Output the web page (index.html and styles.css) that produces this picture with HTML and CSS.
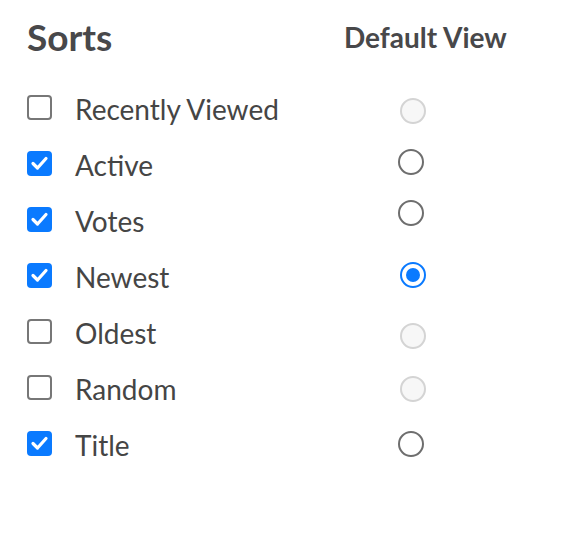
FILE: index.html
```html
<!DOCTYPE html>
<html>
<head>
<meta charset="utf-8">
<link rel="stylesheet" href="styles.css">
</head>
<body>
<div class="panel">
  <div class="head">
    <h2 class="title">Sorts</h2>
    <h3 class="subtitle">Default View</h3>
  </div>
  <ul class="list">
    <li class="row">
      <span class="box"></span>
      <span class="label">Recently Viewed</span>
      <span class="radio disabled r1"></span>
    </li>
    <li class="row">
      <span class="box checked"><svg viewBox="0 0 25 25" width="25" height="25"><polyline points="6,12.5 10.5,17 19,7.5" fill="none" stroke="#fff" stroke-width="3.2" stroke-linecap="round" stroke-linejoin="round"/></svg></span>
      <span class="label">Active</span>
      <span class="radio enabled r2"></span>
    </li>
    <li class="row">
      <span class="box checked"><svg viewBox="0 0 25 25" width="25" height="25"><polyline points="6,12.5 10.5,17 19,7.5" fill="none" stroke="#fff" stroke-width="3.2" stroke-linecap="round" stroke-linejoin="round"/></svg></span>
      <span class="label">Votes</span>
      <span class="radio enabled r3"></span>
    </li>
    <li class="row">
      <span class="box checked"><svg viewBox="0 0 25 25" width="25" height="25"><polyline points="6,12.5 10.5,17 19,7.5" fill="none" stroke="#fff" stroke-width="3.2" stroke-linecap="round" stroke-linejoin="round"/></svg></span>
      <span class="label">Newest</span>
      <span class="radio selected r4"></span>
    </li>
    <li class="row">
      <span class="box"></span>
      <span class="label">Oldest</span>
      <span class="radio disabled r5"></span>
    </li>
    <li class="row">
      <span class="box"></span>
      <span class="label">Random</span>
      <span class="radio disabled r6"></span>
    </li>
    <li class="row">
      <span class="box checked"><svg viewBox="0 0 25 25" width="25" height="25"><polyline points="6,12.5 10.5,17 19,7.5" fill="none" stroke="#fff" stroke-width="3.2" stroke-linecap="round" stroke-linejoin="round"/></svg></span>
      <span class="label">Title</span>
      <span class="radio enabled r7"></span>
    </li>
  </ul>
</div>
</body>
</html>
```
FILE: styles.css
```css
html, body {
  margin: 0;
  padding: 0;
  background: #fff;
}
body {
  font-family: Lato, "Open Sans", sans-serif;
  color: #454545;
}
.panel {
  padding: 15px 0 0 27px;
  width: 549px;
}
.head {
  display: flex;
  align-items: flex-start;
  height: 64px;
}
.title {
  margin: 0;
  font-size: 37px;
  font-weight: 700;
  line-height: 1.2;
  width: 317px;
  flex: none;
  color: #48484a;
}
.subtitle {
  margin: 6px 0 0 0;
  font-size: 28px;
  font-weight: 700;
  line-height: 1.2;
  white-space: nowrap;
  color: #48484a;
}
.list {
  list-style: none;
  margin: 0;
  padding: 0;
}
.row {
  display: flex;
  align-items: center;
  height: 56px;
}
.box {
  box-sizing: border-box;
  width: 25px;
  height: 25px;
  border: 2px solid #777;
  border-radius: 4px;
  flex: none;
  display: block;
  background: #fff;
}
.box.checked {
  border: none;
  background: #0a7aff;
}
.box svg {
  display: block;
}
.label {
  font-size: 28px;
  line-height: 32px;
  padding-top: 4px;
  margin-left: 23px;
  width: 325px;
  flex: none;
}
.radio {
  box-sizing: border-box;
  display: block;
  width: 26px;
  height: 26px;
  border-radius: 50%;
  flex: none;
  position: relative;
}
.radio.disabled {
  border: 2px solid #d4d4d4;
  background: #f7f7f7;
}
.radio.enabled {
  border: 2px solid #6e6e6e;
  background: #fff;
  margin-left: -2px;
}
.radio.selected {
  border: 2px solid #0a7aff;
  background: #fff;
}
.radio.selected::after {
  content: "";
  position: absolute;
  left: 4px;
  top: 4px;
  width: 14px;
  height: 14px;
  border-radius: 50%;
  background: #0a7aff;
}
.r1 { top: 4px; }
.r2 { top: -1px; }
.r3 { top: -6px; }
.r4 { top: 0; }
.r5 { top: 5px; }
.r6 { top: 2px; }
.r7 { top: 1px; }
```
